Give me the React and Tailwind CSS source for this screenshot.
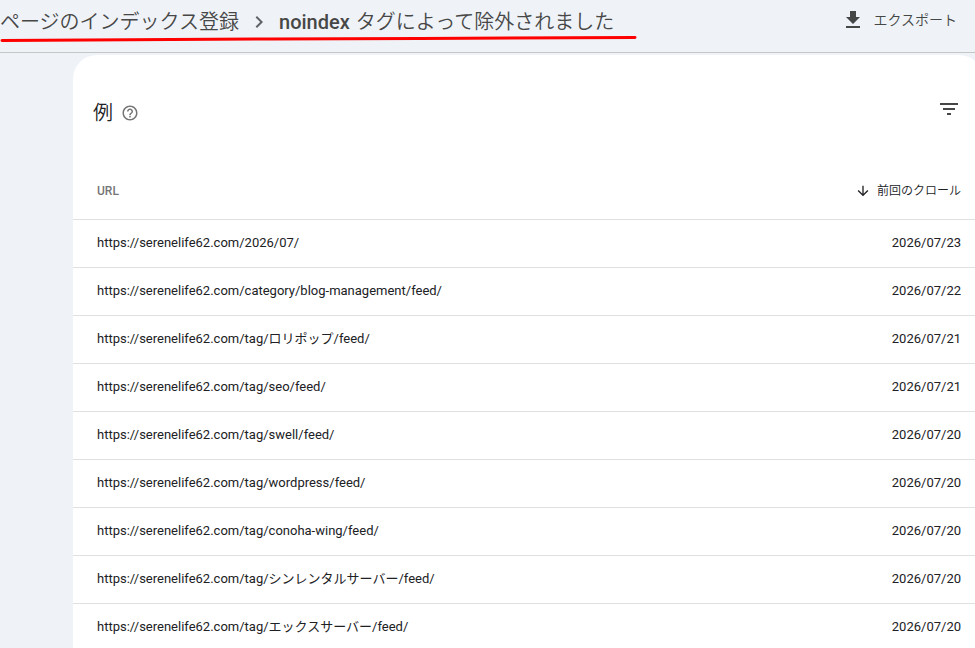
import React from "react";
import {
  MdArrowDownward,
  MdChevronRight,
  MdFileDownload,
  MdFilterList,
  MdHelpOutline,
} from "react-icons/md";

const rows = [
  { url: "https://serenelife62.com/2026/07/", date: "2026/07/23" },
  { url: "https://serenelife62.com/category/blog-management/feed/", date: "2026/07/22" },
  { url: "https://serenelife62.com/tag/ロリポップ/feed/", date: "2026/07/21" },
  { url: "https://serenelife62.com/tag/seo/feed/", date: "2026/07/21" },
  { url: "https://serenelife62.com/tag/swell/feed/", date: "2026/07/20" },
  { url: "https://serenelife62.com/tag/wordpress/feed/", date: "2026/07/20" },
  { url: "https://serenelife62.com/tag/conoha-wing/feed/", date: "2026/07/20" },
  { url: "https://serenelife62.com/tag/シンレンタルサーバー/feed/", date: "2026/07/20" },
  { url: "https://serenelife62.com/tag/エックスサーバー/feed/", date: "2026/07/20" },
];

const Header = () => (
  <header className="relative flex h-[53px] items-start justify-between border-b border-[#c4c7c5] pr-[18px]">
    <nav className="flex h-11 items-center text-xl font-[350] text-[#474747]">
      <a href="#indexing" className="whitespace-nowrap">
        ページのインデックス登録
      </a>
      <MdChevronRight className="mx-2 h-6 w-6 text-[#5f6368]" />
      <h1 className="flex gap-1.5 whitespace-nowrap">
        <span className="font-medium">noindex</span>
        <span>タグによって除外されました</span>
      </h1>
    </nav>
    <button
      type="button"
      className="flex h-10 items-center gap-2 text-sm font-[350] text-[#444746]"
    >
      <MdFileDownload className="h-6 w-6" />
      エクスポート
    </button>
    {/* marker line under the title */}
    <svg
      className="pointer-events-none absolute left-0 top-[34px]"
      width="640"
      height="10"
      viewBox="0 0 640 10"
      fill="none"
      aria-hidden="true"
    >
      <path
        d="M2 6.5 L270 5 L420 4.5 L635 3.5"
        stroke="#ff0000"
        strokeWidth="3"
        strokeLinecap="round"
      />
    </svg>
  </header>
);

const App = () => {
  return (
    <div className="h-screen overflow-hidden bg-[#eff3f8] font-['Roboto','Noto_Sans_CJK_JP',sans-serif]">
      <Header />
      <main className="-mr-2 ml-[73px] mt-0.5 rounded-t-3xl bg-white">
        <div className="flex h-[108px] items-center justify-between pl-5 pr-[22px]">
          <div className="flex items-center gap-2 pt-2">
            <h2 className="text-xl font-[350] text-[#202124]">例</h2>
            <button type="button" aria-label="ヘルプ" className="text-[#757575]">
              <MdHelpOutline className="h-[18px] w-[18px]" />
            </button>
          </div>
          <button type="button" aria-label="フィルタ" className="text-[#444746]">
            <MdFilterList className="h-6 w-6" />
          </button>
        </div>
        <table className="w-full border-collapse text-[13px] text-[#202124]">
          <thead>
            <tr className="h-14">
              <th className="pl-6 text-left text-xs font-medium text-[#757575]">URL</th>
              <th className="pr-[22px] text-xs font-[350]">
                <button type="button" className="ml-auto flex items-center gap-1.5">
                  <MdArrowDownward className="h-4 w-4" />
                  前回のクロール
                </button>
              </th>
            </tr>
          </thead>
          <tbody>
            {rows.map((row) => (
              <tr key={row.url} className="h-12 border-y border-[#e0e0e0]">
                <td className="pl-6">{row.url}</td>
                <td className="pr-[22px] text-right">{row.date}</td>
              </tr>
            ))}
          </tbody>
        </table>
      </main>
    </div>
  );
};

export default App;
